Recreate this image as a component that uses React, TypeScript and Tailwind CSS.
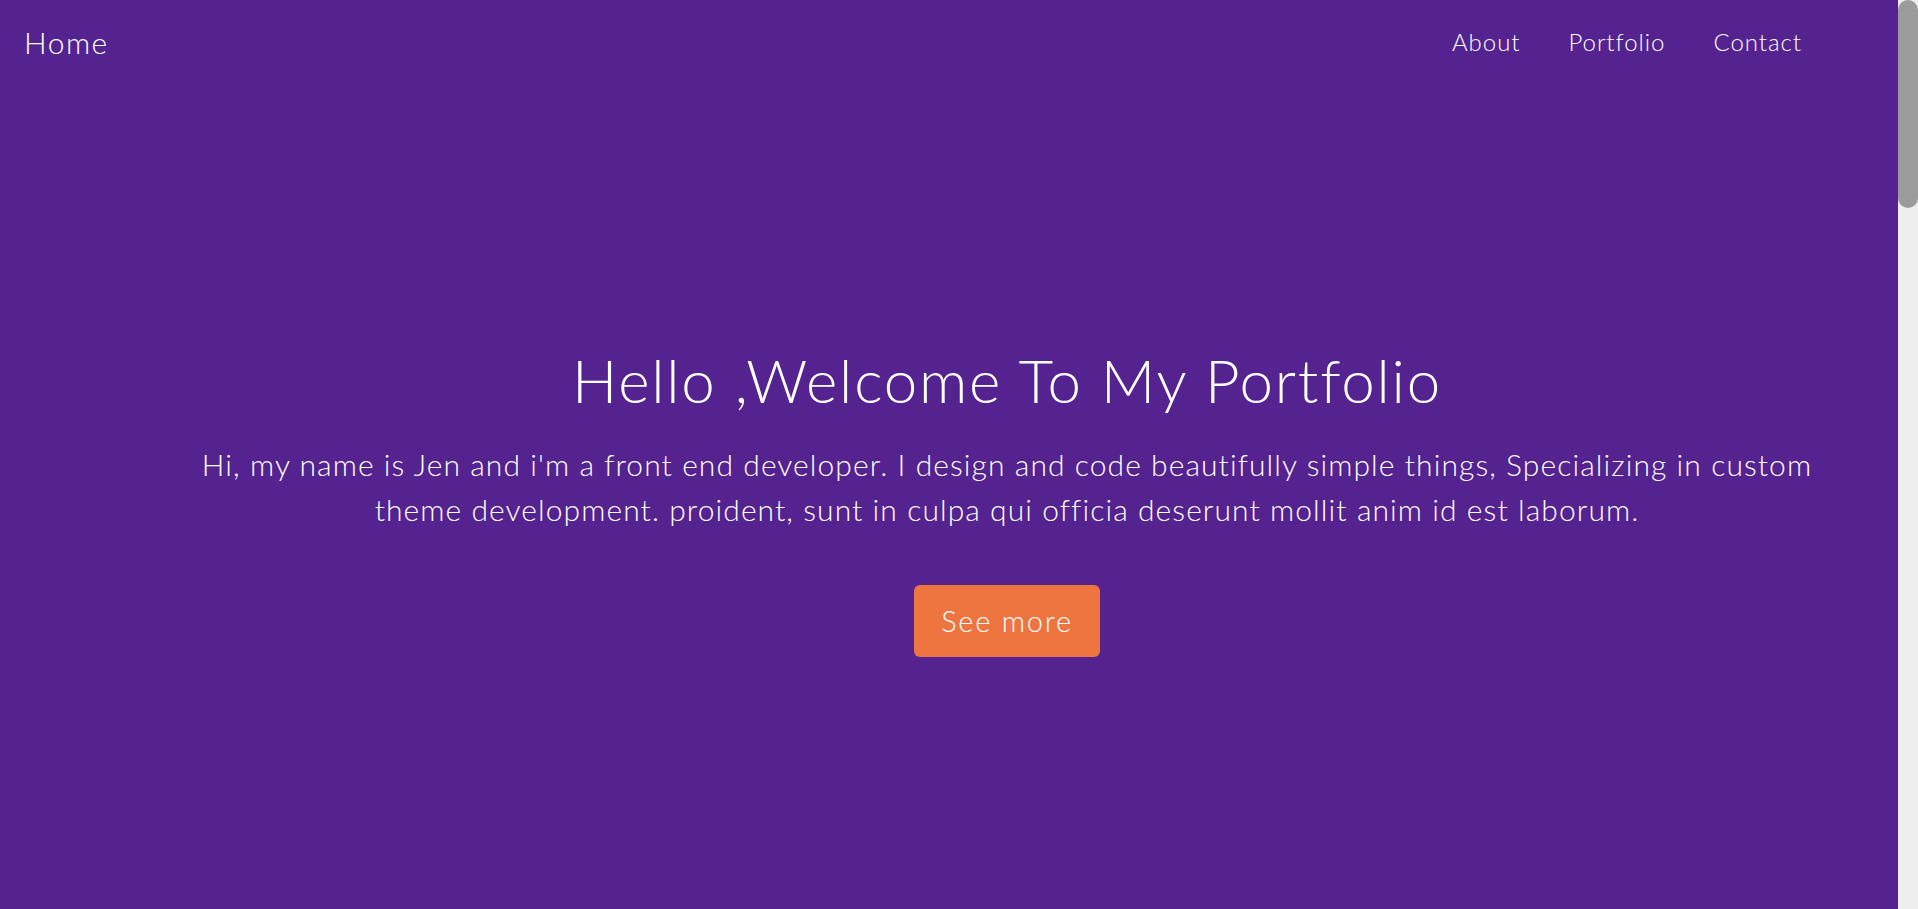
const links = ["About", "Portfolio", "Contact"];

const App = () => {
  return (
    <div className="flex h-screen bg-[#55238f] text-white font-['Lato','Open_Sans',sans-serif]">
      <main className="flex-1 overflow-y-auto [scrollbar-width:none]">
        <div className="min-h-[3970px]">
          {/* Navbar */}
          <nav className="flex h-[84px] items-center justify-between pl-[24px] pr-[96px]">
            <a href="#" className="text-[30px] font-light tracking-[0.05em]">
              Home
            </a>
            <ul className="flex items-center gap-[48px]">
              {links.map((link) => (
                <li key={link}>
                  <a href="#" className="text-[24px] font-light tracking-[0.04em]">
                    {link}
                  </a>
                </li>
              ))}
            </ul>
          </nav>

          {/* Hero */}
          <section className="flex flex-col items-center pl-[200px] pr-[84px] pt-[260px] text-center">
            <h1 className="text-[60px] font-light leading-[72px] tracking-[0.03em]">
              Hello ,Welcome To My Portfolio
            </h1>
            <p className="mt-[26px] text-[30px] font-light leading-[45px] tracking-[0.036em]">
              Hi, my name is Jen and i'm a front end developer. I design and code
              beautifully simple things, Specializing in custom theme development.
              proident, sunt in culpa qui officia deserunt mollit anim id est
              laborum.
            </p>
            <a
              href="#"
              className="mt-[53px] rounded-[6px] bg-[#ee7540] px-[27px] py-[18px] text-[29px] leading-[36px] font-light tracking-[0.06em]"
            >
              See more
            </a>
          </section>
        </div>
      </main>

      {/* scrollbar */}
      <div className="w-[20px] shrink-0 bg-[#eeeeee]">
        <div className="h-[208px] rounded-full bg-[#9b9b9b]" />
      </div>
    </div>
  );
};

export default App;
